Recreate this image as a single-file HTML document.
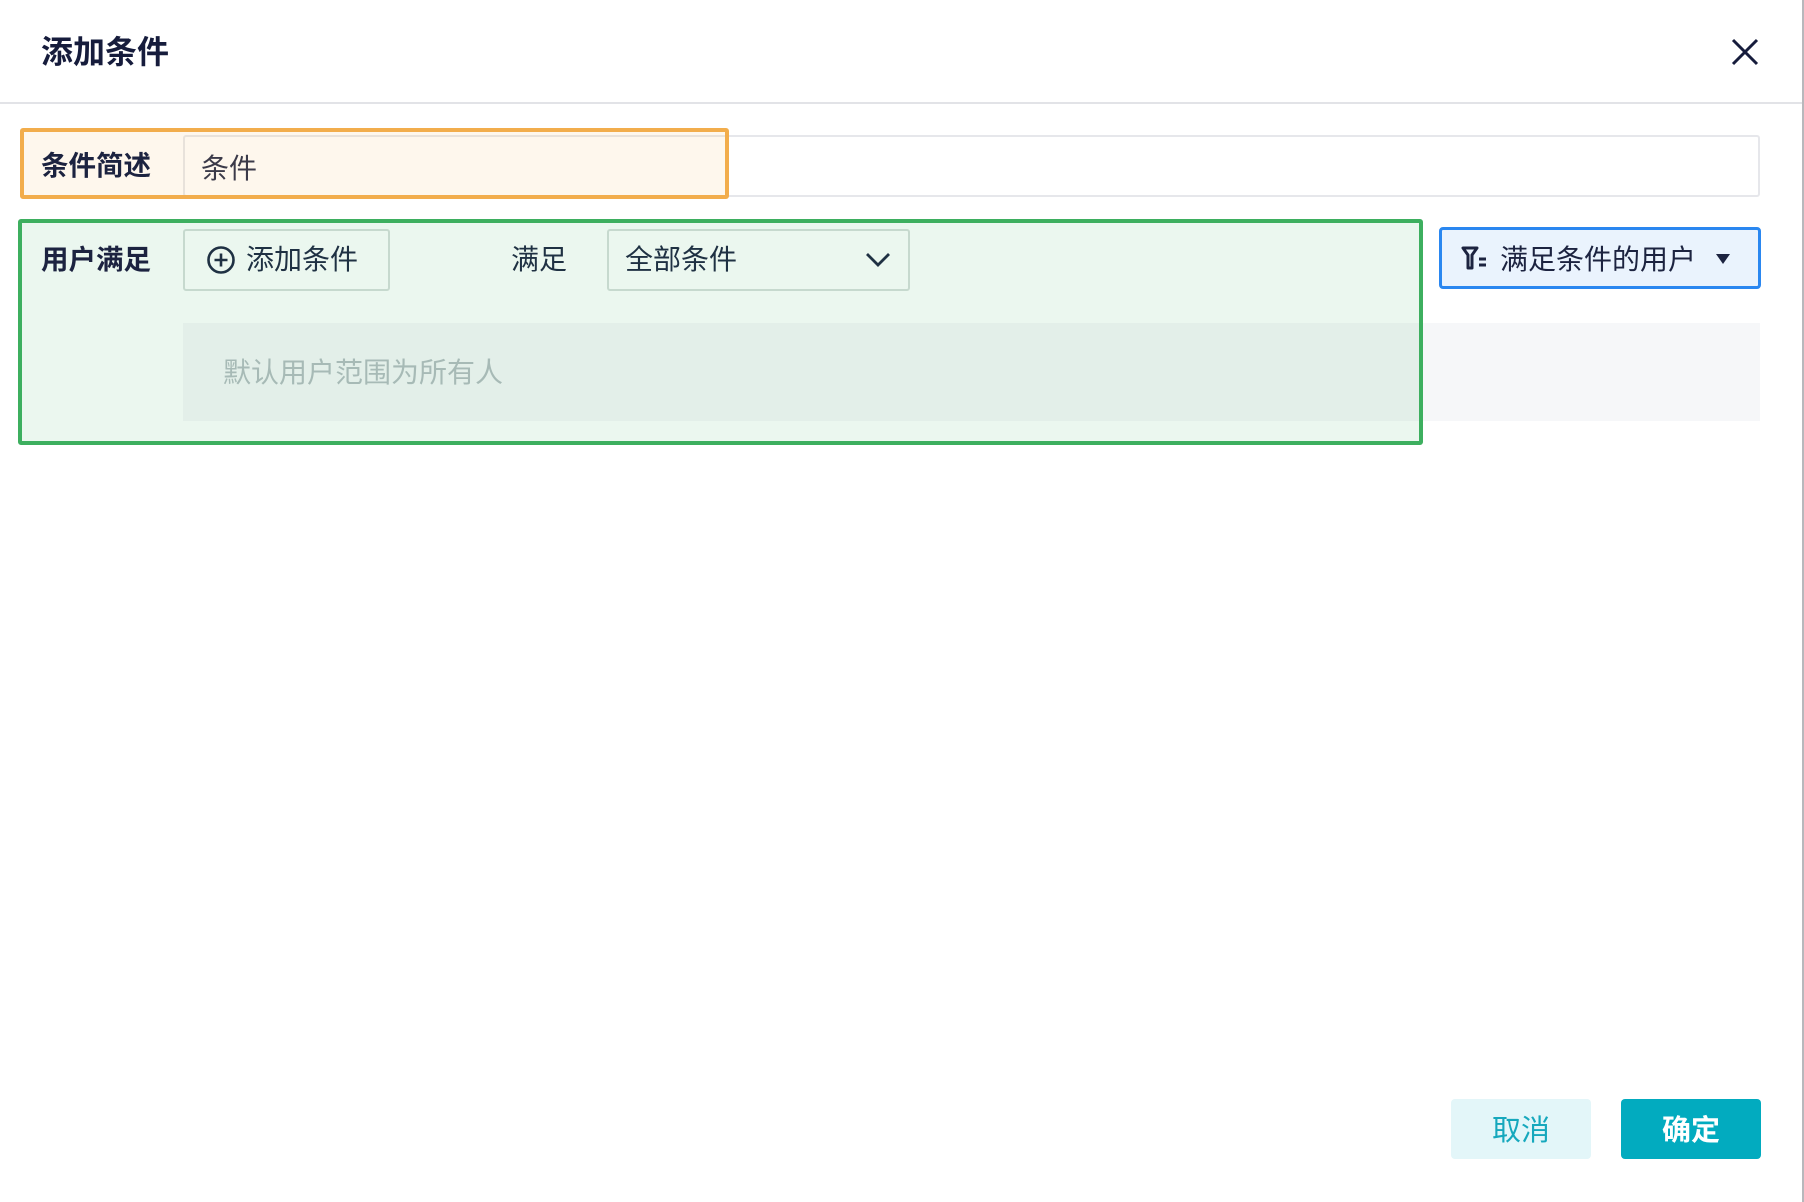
<!DOCTYPE html>
<html><head><meta charset="utf-8"><style>
*{box-sizing:border-box;margin:0;padding:0}
body{width:1804px;height:1202px;background:#fff;position:relative;overflow:hidden;font-family:"Liberation Sans","Noto Sans CJK SC",sans-serif;color:#1c2340}
.a{position:absolute}
.t{display:flex;align-items:center}
</style></head><body>
<div class="a" style="right:0;top:0;width:2px;height:1202px;background:#b8b8bc"></div>
<div class="a t" style="left:41px;top:28px;height:44px;font-size:32px;font-weight:bold;color:#161c3c">添加条件</div>
<svg class="a" style="left:1731px;top:38px" width="28" height="28" viewBox="0 0 28 28"><path d="M2 2L26 26M26 2L2 26" stroke="#161c3c" stroke-width="3"/></svg>
<div class="a" style="left:0;top:102px;width:1802px;height:2px;background:#e2e3e7"></div>

<div class="a" style="left:183px;top:135px;width:1577px;height:62px;border:2px solid #e6e7eb;border-radius:3px"></div>
<div class="a t" style="left:201px;top:145px;height:44px;font-size:28px">条件</div>
<div class="a" style="left:20px;top:128px;width:709px;height:71px;border:4px solid #f2ad4c;border-radius:3px;background:rgba(250,200,130,0.14)"></div>
<div class="a t" style="left:41px;top:141px;height:44px;font-size:27.5px;font-weight:bold">条件简述</div>

<div class="a" style="left:183px;top:323px;width:1577px;height:98px;background:#f6f7f9"></div>
<div class="a t" style="left:223px;top:349px;height:44px;font-size:28px;color:#b4bcc0">默认用户范围为所有人</div>
<div class="a" style="left:183px;top:229px;width:207px;height:62px;border:2px solid #d6dedb;border-radius:3px"></div>
<svg class="a" style="left:206px;top:245px" width="30" height="30" viewBox="0 0 30 30"><circle cx="15" cy="15" r="12.5" fill="none" stroke="#1c2340" stroke-width="2.6"/><path d="M15 8.5V21.5M8.5 15H21.5" stroke="#1c2340" stroke-width="2.6"/></svg>
<div class="a t" style="left:246px;top:236px;height:44px;font-size:28px">添加条件</div>
<div class="a t" style="left:511px;top:236px;height:44px;font-size:28px">满足</div>
<div class="a" style="left:607px;top:229px;width:303px;height:62px;border:2px solid #d6dedb;border-radius:3px"></div>
<div class="a t" style="left:625px;top:236px;height:44px;font-size:28px">全部条件</div>
<svg class="a" style="left:864px;top:250px" width="28" height="20" viewBox="0 0 28 20"><path d="M3 4L14 15L25 4" fill="none" stroke="#1c2340" stroke-width="2.8"/></svg>
<div class="a" style="left:18px;top:219px;width:1405px;height:226px;border:4px solid #3daf5f;border-radius:3px;background:rgba(61,175,95,0.1)"></div>
<div class="a t" style="left:41px;top:235px;height:44px;font-size:27.5px;font-weight:bold">用户满足</div>

<div class="a" style="left:1439px;top:227px;width:322px;height:62px;border:3px solid #2a87f0;border-radius:4px;background:#eaf3fd"></div>
<svg class="a" style="left:1461px;top:246px" width="28" height="24" viewBox="0 0 28 24"><path d="M2 2H16L11 9V22H7V9Z" fill="none" stroke="#1c2340" stroke-width="3" stroke-linejoin="round"/><path d="M18 13H25M18 19H25" stroke="#1c2340" stroke-width="3"/></svg>
<div class="a t" style="left:1500px;top:236px;height:44px;font-size:28px">满足条件的用户</div>
<svg class="a" style="left:1715px;top:253px" width="16" height="12" viewBox="0 0 16 12"><path d="M1 1H15L8 11Z" fill="#1c2340"/></svg>

<div class="a t" style="left:1451px;top:1099px;width:140px;height:60px;background:#e3f6f9;border-radius:4px;justify-content:center;font-size:29px;color:#16a8bd;padding-bottom:2px">取消</div>
<div class="a t" style="left:1621px;top:1099px;width:140px;height:60px;background:#02abbf;border-radius:4px;justify-content:center;font-size:29px;color:#fff;font-weight:bold;padding-bottom:2px">确定</div>
</body></html>
